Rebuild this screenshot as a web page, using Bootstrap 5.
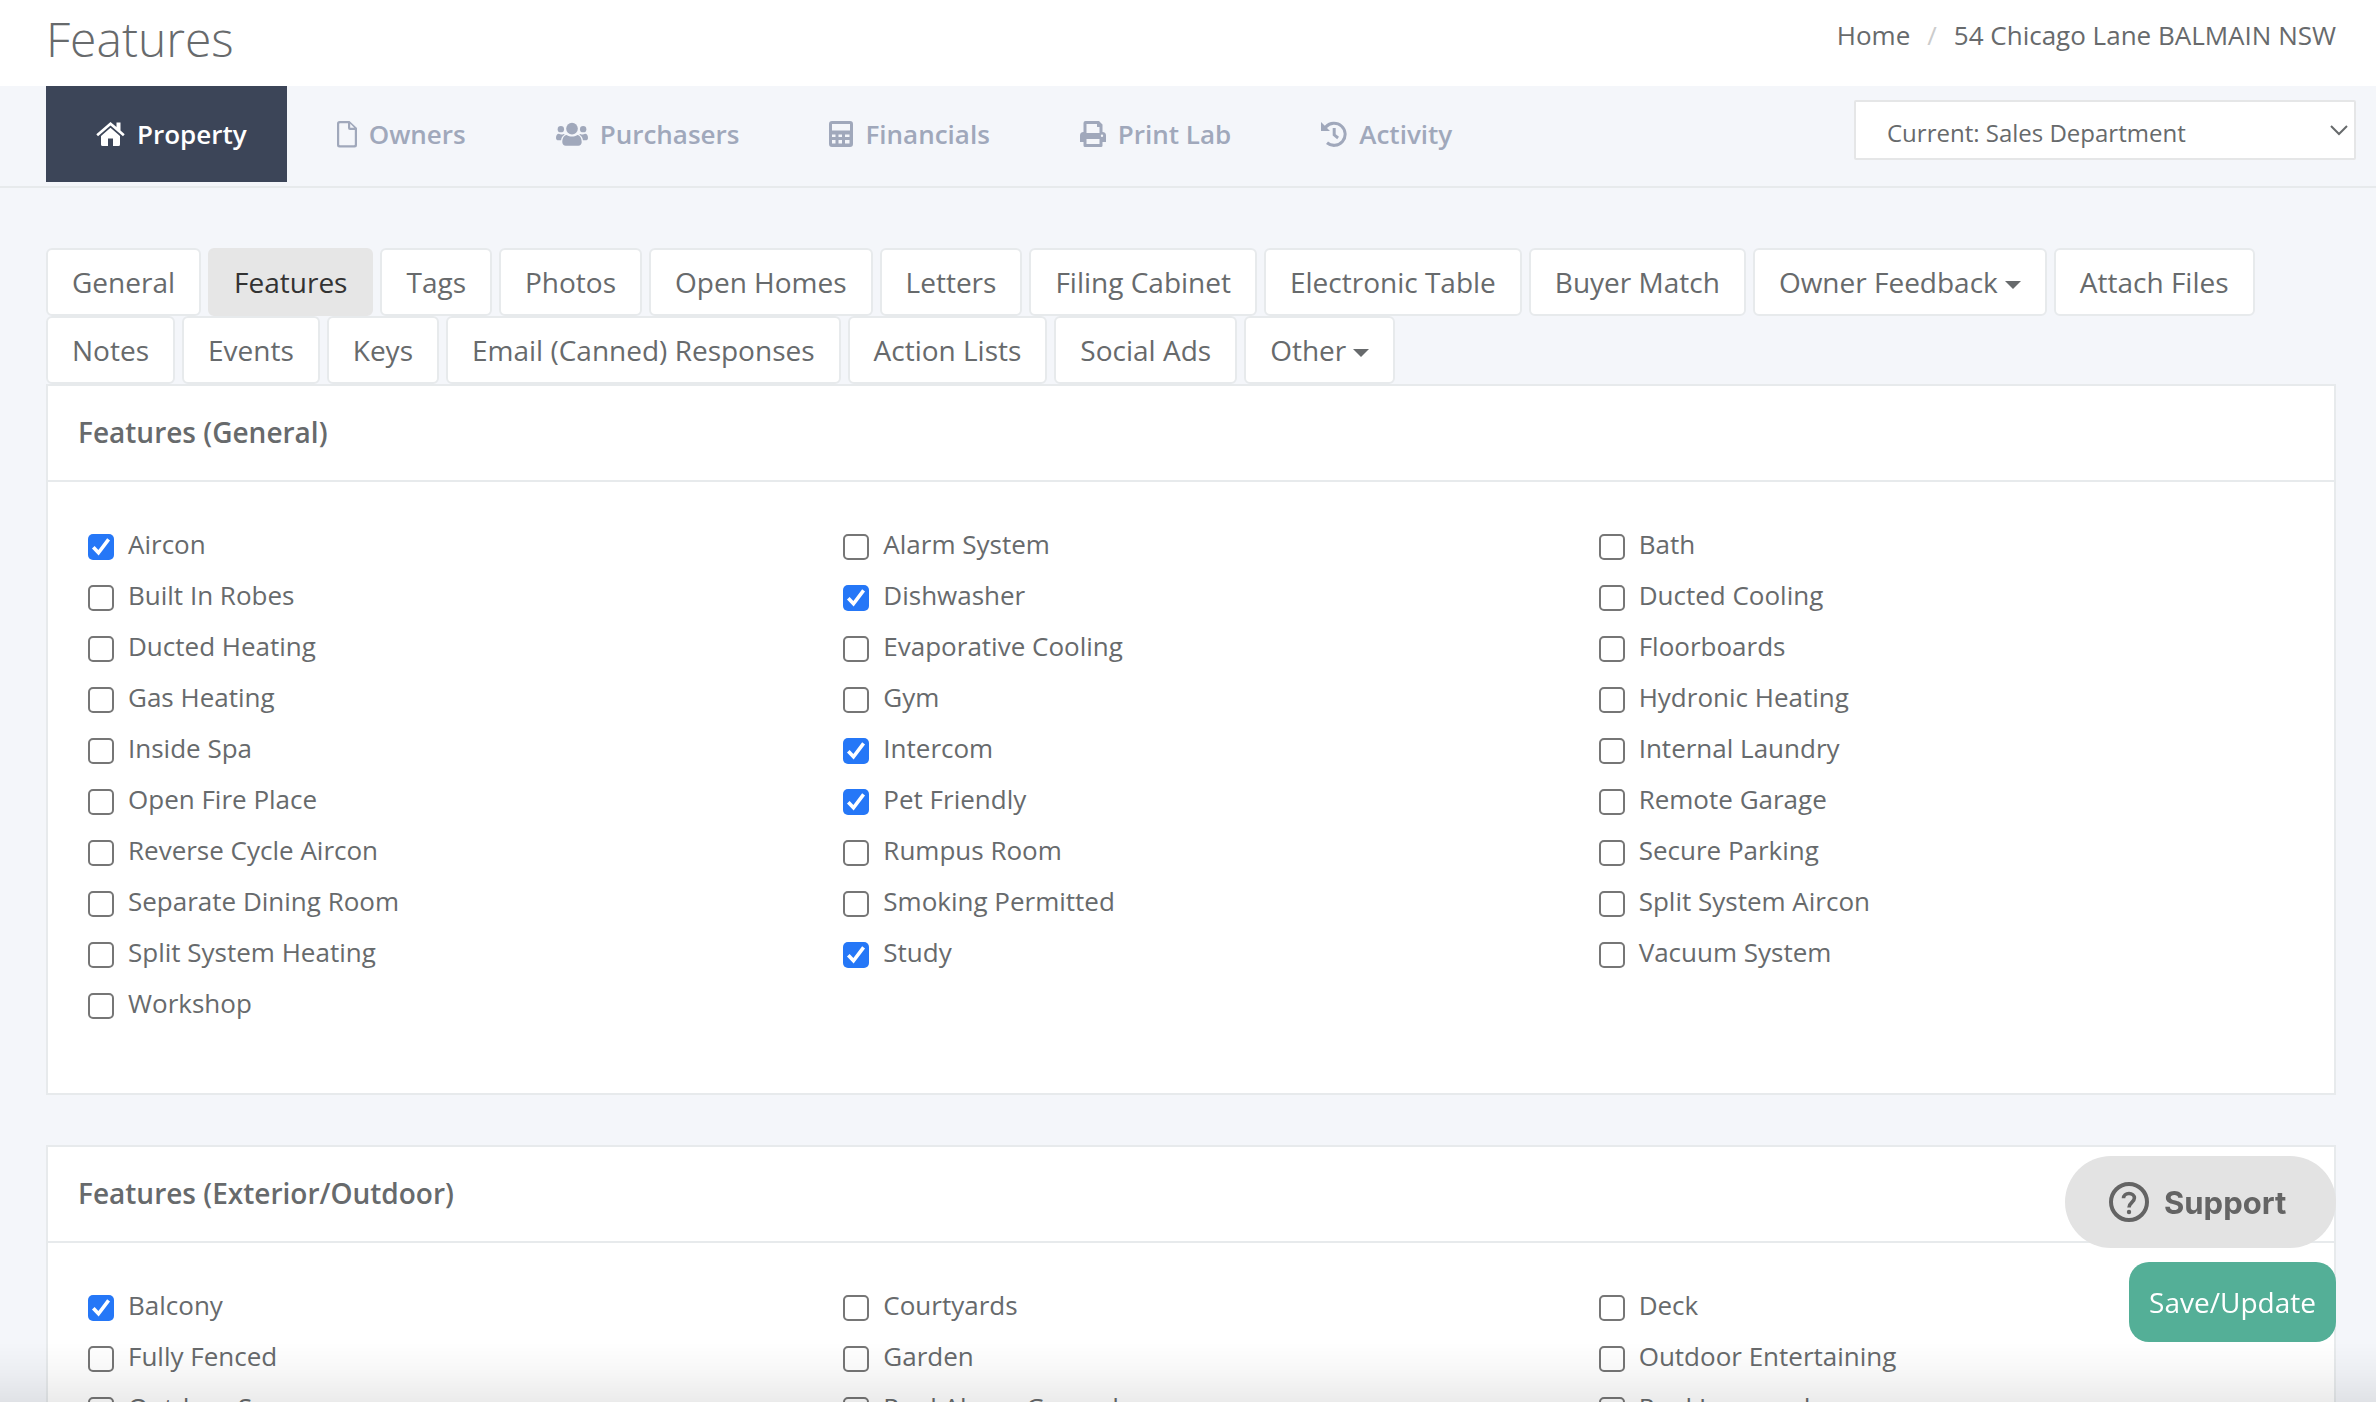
<!DOCTYPE html>
<html lang="en">
<head>
<meta charset="utf-8">
<meta name="viewport" content="width=device-width, initial-scale=1">
<title>Features</title>
<link href="https://cdn.jsdelivr.net/npm/bootstrap@5.3.0/dist/css/bootstrap.min.css" rel="stylesheet">
<style>
  body { font-family: "Open Sans", sans-serif; font-size: 26px; color: #676a6c; background: #f4f6fa; }
  a { color: inherit; text-decoration: none; }
  .app-shell { height: 100vh; overflow: hidden; }
  .page-head { height: 86px; padding: 0 40px 0 46px; }
  .page-title { font-size: 48px; font-weight: 300; line-height: 78px; }
  .page-head .breadcrumb { line-height: 70px; --bs-breadcrumb-divider-color: #ccc; --bs-breadcrumb-item-active-color: #676a6c; --bs-breadcrumb-item-padding-x: 17px; }
  .main-nav { height: 102px; border-bottom: 2px solid #e7eaec; padding: 0 20px 0 46px; }
  .main-nav .nav-link { height: 96px; padding: 0 40px 0 50px; gap: 12px; font-weight: 600; color: #a0a8bb; }
  .main-nav .nav-link.active { background: #3c4558; color: #fff; }
  .main-nav svg { height: 28px; fill: currentColor; }
  .dept-select { width: 502px; height: 60px; margin-top: 14px; padding: 6px 40px 0 31px; font-size: 24px; color: #676a6c; border: 2px solid #e5e6e7; border-radius: 2px;
    background-image: url("data:image/svg+xml,%3csvg xmlns='http://www.w3.org/2000/svg' viewBox='0 0 18 12'%3e%3cpath d='M1 2l8 8 8-8' fill='none' stroke='%23676a6c' stroke-width='2'/%3e%3c/svg%3e");
    background-position: right 6px center; background-size: 18px 12px; }
  .content-area { padding: 60px 40px 0 46px; }
  .sub-tabs { column-gap: 7px; }
  .sub-tabs .nav-link { height: 68px; padding: 0 24px; line-height: 64px; font-size: 28px; color: #676a6c; background: #fff; border: 2px solid #e7eaec; border-radius: 6px; }
  .sub-tabs .nav-link.active { background: #e6e6e6; border-color: #e6e6e6; color: #333; }
  .sub-tabs .dropdown-toggle::after { border-top-width: 8px; border-left-width: 8px; border-right-width: 8px; margin-left: 7px; vertical-align: 4px; }
  .panel { border: 2px solid #e7eaec; border-radius: 0; background: #fff; color: inherit; margin-bottom: 50px; }
  .panel-title { font-size: 28px; font-weight: 600; line-height: 36px; padding: 28px 30px 30px; border-bottom: 2px solid #e7eaec; }
  .panel-content { padding: 37px 10px 64px; }
  .feature { padding-left: 30px; height: 51px; gap: 14px; }
  .feature .form-check-input { flex: none; width: 26px; height: 26px; margin: 5px 0 0; border: 2px solid #767676; border-radius: 5px; }
  .feature .form-check-input:checked { background-color: #2577f7; border: 0; background-size: 26px 26px;
    background-image: url("data:image/svg+xml,%3csvg xmlns='http://www.w3.org/2000/svg' viewBox='0 0 26 26'%3e%3cpath d='M5.3 13.2l5.2 5.6L20.6 5.4' fill='none' stroke='%23fff' stroke-width='3.6'/%3e%3c/svg%3e"); }
  .float-actions { right: 40px; bottom: 60px; gap: 14px; z-index: 20; }
  .support-btn { height: 92px; width: 271px; padding: 0 0 0 44px; border: 0; border-radius: 46px; background: #e3e3e3; color: #646464; font: 700 31px Inter, sans-serif; gap: 15px; }
  .save-btn { height: 80px; width: 207px; border: 0; border-radius: 20px; background: #54af97; color: #fff; font-size: 28px; }
  .foot-shade { height: 60px; z-index: 10; pointer-events: none; background: linear-gradient(to bottom, rgba(0,0,0,0), rgba(0,0,0,.03) 50%, rgba(0,0,0,.08)); }
</style>
<script src="https://cdn.jsdelivr.net/npm/bootstrap@5.3.0/dist/js/bootstrap.bundle.min.js"></script>
</head>
<body>
<div class="app-shell">
  <header class="page-head bg-white d-flex justify-content-between">
    <h1 class="page-title m-0">Features</h1>
    <nav aria-label="breadcrumb">
      <ol class="breadcrumb m-0">
        <li class="breadcrumb-item"><a href="#">Home</a></li>
        <li class="breadcrumb-item active" aria-current="page">54 Chicago Lane BALMAIN NSW</li>
      </ol>
    </nav>
  </header>

  <div class="main-nav d-flex justify-content-between">
    <nav class="nav flex-nowrap" aria-label="Sections">
      <a class="nav-link active d-flex align-items-center" href="#">
        <svg width="29" viewBox="0 0 29 28"><path d="M14.500 2 .3 14.300l1.700 2L14.500 5.600 27 16.300l1.700-2L24.500 10.600V2.500h-4v4.600z"/><path d="M14.500 7.800 5 16v8.500a1.500 1.500 0 0 0 1.500 1.500H12v-7.500h5V26h5.500a1.500 1.500 0 0 0 1.500-1.500V16z"/></svg>
        Property</a>
      <a class="nav-link d-flex align-items-center" href="#">
        <svg width="20" viewBox="0 0 20 28"><path fill-rule="evenodd" d="M3 1h9.500L20 8V25a2.500 2.500 0 0 1-2.500 2.500h-15A2.500 2.500 0 0 1 0 25V3.500A2.500 2.500 0 0 1 2.500 1zM3 3.200a.8.8 0 0 0-.8.800v20.500a.8.800 0 0 0 .8.800h14a.8.800 0 0 0 .8-.8V10H13a2 2 0 0 1-2-2V3.200zm10.200.5V7.800h4z"/></svg>
        Owners</a>
      <a class="nav-link d-flex align-items-center" href="#">
        <svg width="32" viewBox="0 0 33 28"><circle cx="16.500" cy="8.500" r="6"/><circle cx="5" cy="9" r="3.300"/><circle cx="28" cy="9" r="3.300"/><path d="M11 15c3.500 2.200 7.500 2.200 11 0 3 .5 4.500 3.500 4.500 7.500 0 2-1.500 3.500-3.500 3.500H10c-2 0-3.500-1.500-3.500-3.500 0-4 1.500-7 4.500-7.500zM3 13.800c1.500 1 3.500 1 5 .2l1 .5C6.500 16 5.500 18 5.200 20.500H2.500C1 20.500 0 19.500 0 18c0-2.200 1-4.200 3-4.200zM30 13.800c-1.500 1-3.500 1-5 .2l-1 .5c2.500 1.500 3.500 3.500 3.800 6h2.700c1.500 0 2.500-1 2.500-2.500 0-2.200-1-4.200-3-4.200z"/></svg>
        Purchasers</a>
      <a class="nav-link d-flex align-items-center" href="#">
        <svg width="24" viewBox="0 0 24 28"><path fill-rule="evenodd" d="M3 1h18a3 3 0 0 1 3 3v20a3 3 0 0 1-3 3H3a3 3 0 0 1-3-3V4a3 3 0 0 1 3-3zm0 3v6.500h18V4zm0 10.500V17h3.500v-2.500zm6.500 0V17H13v-2.500zm6.500 0V17h4.500v-2.500zM3 20v3.500h3.500V20zm6.500 0v3.500H13V20zm6.500 0v3.500h4.500V20z"/></svg>
        Financials</a>
      <a class="nav-link d-flex align-items-center" href="#">
        <svg width="26" viewBox="0 0 26 28"><path fill-rule="evenodd" d="M5.500 1H19l3.500 3.500V12A3.500 3.500 0 0 1 26 15.500V22h-3.500v3.500A1.500 1.500 0 0 1 21 27H5a1.500 1.500 0 0 1-1.500-1.500V22H0v-6.500A3.500 3.500 0 0 1 3.500 12V3a2 2 0 0 1 2-2zm1 3v9h13V7H17V4zM6.500 19v5h13v-5zM22 14.500a1.200 1.200 0 1 0 0 2.400 1.200 1.200 0 0 0 0-2.400z"/></svg>
        Print Lab</a>
      <a class="nav-link d-flex align-items-center" href="#">
        <svg width="26" viewBox="0 0 26 28"><path d="M0 2v9h9L6 8a9.500 9.500 0 1 1 1 13.500L5 24A12.600 12.600 0 1 0 3.800 5.700z"/><path d="M11.700 8h3v6.200l3.300 2.600-1.800 2.400-4.500-3.600z"/></svg>
        Activity</a>
    </nav>
    <select class="form-select dept-select" aria-label="Department">
      <option>Current: Sales Department</option>
    </select>
  </div>

  <main class="content-area">
    <nav class="nav sub-tabs" aria-label="Property pages">
      <a class="nav-link" href="#">General</a>
      <a class="nav-link active" href="#" aria-current="page">Features</a>
      <a class="nav-link" href="#">Tags</a>
      <a class="nav-link" href="#">Photos</a>
      <a class="nav-link" href="#">Open Homes</a>
      <a class="nav-link" href="#">Letters</a>
      <a class="nav-link" href="#">Filing Cabinet</a>
      <a class="nav-link" href="#">Electronic Table</a>
      <a class="nav-link" href="#">Buyer Match</a>
      <a class="nav-link dropdown-toggle" href="#" role="button">Owner Feedback</a>
      <a class="nav-link" href="#">Attach Files</a>
      <a class="nav-link" href="#">Notes</a>
      <a class="nav-link" href="#">Events</a>
      <a class="nav-link" href="#">Keys</a>
      <a class="nav-link" href="#">Email (Canned) Responses</a>
      <a class="nav-link" href="#">Action Lists</a>
      <a class="nav-link" href="#">Social Ads</a>
      <a class="nav-link dropdown-toggle" href="#" role="button">Other</a>
    </nav>

    <section class="panel">
      <h2 class="panel-title m-0">Features (General)</h2>
      <div class="panel-content">
        <div class="row row-cols-3 g-0">
          <div class="feature d-flex align-items-center"><input class="form-check-input" type="checkbox" id="g1" checked><label for="g1">Aircon</label></div>
          <div class="feature d-flex align-items-center"><input class="form-check-input" type="checkbox" id="g2"><label for="g2">Alarm System</label></div>
          <div class="feature d-flex align-items-center"><input class="form-check-input" type="checkbox" id="g3"><label for="g3">Bath</label></div>
          <div class="feature d-flex align-items-center"><input class="form-check-input" type="checkbox" id="g4"><label for="g4">Built In Robes</label></div>
          <div class="feature d-flex align-items-center"><input class="form-check-input" type="checkbox" id="g5" checked><label for="g5">Dishwasher</label></div>
          <div class="feature d-flex align-items-center"><input class="form-check-input" type="checkbox" id="g6"><label for="g6">Ducted Cooling</label></div>
          <div class="feature d-flex align-items-center"><input class="form-check-input" type="checkbox" id="g7"><label for="g7">Ducted Heating</label></div>
          <div class="feature d-flex align-items-center"><input class="form-check-input" type="checkbox" id="g8"><label for="g8">Evaporative Cooling</label></div>
          <div class="feature d-flex align-items-center"><input class="form-check-input" type="checkbox" id="g9"><label for="g9">Floorboards</label></div>
          <div class="feature d-flex align-items-center"><input class="form-check-input" type="checkbox" id="g10"><label for="g10">Gas Heating</label></div>
          <div class="feature d-flex align-items-center"><input class="form-check-input" type="checkbox" id="g11"><label for="g11">Gym</label></div>
          <div class="feature d-flex align-items-center"><input class="form-check-input" type="checkbox" id="g12"><label for="g12">Hydronic Heating</label></div>
          <div class="feature d-flex align-items-center"><input class="form-check-input" type="checkbox" id="g13"><label for="g13">Inside Spa</label></div>
          <div class="feature d-flex align-items-center"><input class="form-check-input" type="checkbox" id="g14" checked><label for="g14">Intercom</label></div>
          <div class="feature d-flex align-items-center"><input class="form-check-input" type="checkbox" id="g15"><label for="g15">Internal Laundry</label></div>
          <div class="feature d-flex align-items-center"><input class="form-check-input" type="checkbox" id="g16"><label for="g16">Open Fire Place</label></div>
          <div class="feature d-flex align-items-center"><input class="form-check-input" type="checkbox" id="g17" checked><label for="g17">Pet Friendly</label></div>
          <div class="feature d-flex align-items-center"><input class="form-check-input" type="checkbox" id="g18"><label for="g18">Remote Garage</label></div>
          <div class="feature d-flex align-items-center"><input class="form-check-input" type="checkbox" id="g19"><label for="g19">Reverse Cycle Aircon</label></div>
          <div class="feature d-flex align-items-center"><input class="form-check-input" type="checkbox" id="g20"><label for="g20">Rumpus Room</label></div>
          <div class="feature d-flex align-items-center"><input class="form-check-input" type="checkbox" id="g21"><label for="g21">Secure Parking</label></div>
          <div class="feature d-flex align-items-center"><input class="form-check-input" type="checkbox" id="g22"><label for="g22">Separate Dining Room</label></div>
          <div class="feature d-flex align-items-center"><input class="form-check-input" type="checkbox" id="g23"><label for="g23">Smoking Permitted</label></div>
          <div class="feature d-flex align-items-center"><input class="form-check-input" type="checkbox" id="g24"><label for="g24">Split System Aircon</label></div>
          <div class="feature d-flex align-items-center"><input class="form-check-input" type="checkbox" id="g25"><label for="g25">Split System Heating</label></div>
          <div class="feature d-flex align-items-center"><input class="form-check-input" type="checkbox" id="g26" checked><label for="g26">Study</label></div>
          <div class="feature d-flex align-items-center"><input class="form-check-input" type="checkbox" id="g27"><label for="g27">Vacuum System</label></div>
          <div class="feature d-flex align-items-center"><input class="form-check-input" type="checkbox" id="g28"><label for="g28">Workshop</label></div>
        </div>
      </div>
    </section>

    <section class="panel">
      <h2 class="panel-title m-0">Features (Exterior/Outdoor)</h2>
      <div class="panel-content">
        <div class="row row-cols-3 g-0">
          <div class="feature d-flex align-items-center"><input class="form-check-input" type="checkbox" id="e1" checked><label for="e1">Balcony</label></div>
          <div class="feature d-flex align-items-center"><input class="form-check-input" type="checkbox" id="e2"><label for="e2">Courtyards</label></div>
          <div class="feature d-flex align-items-center"><input class="form-check-input" type="checkbox" id="e3"><label for="e3">Deck</label></div>
          <div class="feature d-flex align-items-center"><input class="form-check-input" type="checkbox" id="e4"><label for="e4">Fully Fenced</label></div>
          <div class="feature d-flex align-items-center"><input class="form-check-input" type="checkbox" id="e5"><label for="e5">Garden</label></div>
          <div class="feature d-flex align-items-center"><input class="form-check-input" type="checkbox" id="e6"><label for="e6">Outdoor Entertaining</label></div>
          <div class="feature d-flex align-items-center"><input class="form-check-input" type="checkbox" id="e7"><label for="e7">Outdoor Spa</label></div>
          <div class="feature d-flex align-items-center"><input class="form-check-input" type="checkbox" id="e8"><label for="e8">Pool Above Ground</label></div>
          <div class="feature d-flex align-items-center"><input class="form-check-input" type="checkbox" id="e9"><label for="e9">Pool Inground</label></div>
        </div>
      </div>
    </section>
  </main>
</div>

<div class="foot-shade position-fixed bottom-0 start-0 end-0"></div>
<div class="float-actions position-fixed d-flex flex-column align-items-end">
  <button class="support-btn d-flex align-items-center" type="button">
    <svg width="40" height="40" viewBox="0 0 40 40" fill="none" stroke="currentColor"><circle cx="20" cy="20" r="18" stroke-width="4"/><path d="M14.500 16.300c0-3 2.400-4.800 5.500-4.800s5.400 1.900 5.400 4.600c0 4.200-5.400 4.400-5.400 9.400" stroke-width="3.600"/><circle cx="20" cy="30" r="2.200" fill="currentColor" stroke="none"/></svg>
    Support</button>
  <button class="save-btn p-0" type="button">Save/Update</button>
</div>
</body>
</html>
